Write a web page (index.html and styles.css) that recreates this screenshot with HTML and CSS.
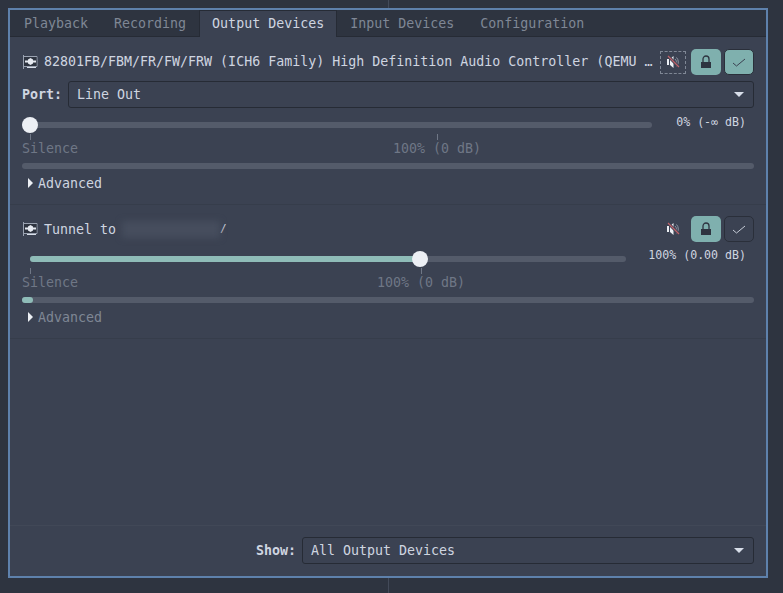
FILE: index.html
```html
<!DOCTYPE html>
<html lang="en">
<head>
  <meta charset="UTF-8">
  <title>Volume Control</title>
  <link rel="stylesheet" href="styles.css">
</head>
<body>
  <div class="backline"></div>
  <div class="window">
    <div class="tabs">
      <div class="tab">Playback</div>
      <div class="tab">Recording</div>
      <div class="tab active">Output Devices</div>
      <div class="tab">Input Devices</div>
      <div class="tab">Configuration</div>
    </div>

    <div class="device">
      <div class="header">
        <svg class="card" width="16" height="16" viewBox="0 0 16 16"><path d="M1.500 1v14M1.500 2.500h13.500v10H1.500" fill="none" stroke="#9aa2b1"/><rect x="2" y="3" width="12.500" height="9" fill="#2e3440"/><path d="M3 6.500h3v-1l2.500-1.500 2.500 1.500v1h3v2h-3v1L8.500 11 6 9.500v-1H3z" fill="#e5e9f0"/><rect x="5" y="13" width="9" height="1" fill="#d8dee9"/></svg>
        <div class="title">82801FB/FBM/FR/FW/FRW (ICH6 Family) High Definition Audio Controller (QEMU …</div>
        <div class="btn mute focus">
          <svg width="16" height="16" viewBox="0 0 16 16"><path d="M2 5h2v6H2zM5 5l3.500-3v12L5 11z" fill="#eceff4"/><path d="M10 5a4 4 0 0 1 0 6M11.500 3.500a6.500 6.500 0 0 1 0 9" fill="none" stroke="#8f96a5"/><path d="M3 2l11 11" stroke="#3b4252" stroke-width="3"/><path d="M3 2l11 11" stroke="#bf616a" stroke-width="1.200"/></svg>
        </div>
        <div class="btn lock on">
          <svg width="16" height="16" viewBox="0 0 16 16"><path d="M5 8.500V5a3 3 0 0 1 6 0v3.500" fill="none" stroke="#2e3440" stroke-width="1.300"/><rect x="3" y="8" width="10" height="6" fill="#2e3440"/></svg>
        </div>
        <div class="btn check on outlined">
          <svg width="16" height="16" viewBox="0 0 16 16"><path d="M2 9l3.500 3L14 5" fill="none" stroke="#3b4252" stroke-width="1"/></svg>
        </div>
      </div>

      <div class="port">
        <span class="field-label">Port:</span>
        <div class="select"><span>Line Out</span><span class="caret"></span></div>
      </div>

      <div class="slider-row">
        <div class="track">
          <div class="thumb" style="left: 0"></div>
        </div>
        <div class="value first">0% (-∞ dB)</div>
      </div>
      <div class="marks">
        <div class="mark start"><i></i>Silence</div>
        <div class="mark" style="margin-left: 315px"><i></i>100% (0 dB)</div>
      </div>
      <div class="level"></div>
      <div class="advanced"><span class="arrow"></span>Advanced</div>
    </div>

    <div class="device tunnel">
      <div class="header">
        <svg class="card" width="16" height="16" viewBox="0 0 16 16"><path d="M1.500 1v14M1.500 2.500h13.500v10H1.500" fill="none" stroke="#9aa2b1"/><rect x="2" y="3" width="12.500" height="9" fill="#2e3440"/><path d="M3 6.500h3v-1l2.500-1.500 2.500 1.500v1h3v2h-3v1L8.500 11 6 9.500v-1H3z" fill="#e5e9f0"/><rect x="5" y="13" width="9" height="1" fill="#d8dee9"/></svg>
        <div class="title">Tunnel to <span class="blurred"></span><span class="slash">/</span></div>
        <div class="btn mute">
          <svg width="16" height="16" viewBox="0 0 16 16"><path d="M2 5h2v6H2zM5 5l3.500-3v12L5 11z" fill="#eceff4"/><path d="M10 5a4 4 0 0 1 0 6M11.500 3.500a6.500 6.500 0 0 1 0 9" fill="none" stroke="#8f96a5"/><path d="M3 2l11 11" stroke="#3b4252" stroke-width="3"/><path d="M3 2l11 11" stroke="#bf616a" stroke-width="1.200"/></svg>
        </div>
        <div class="btn lock on">
          <svg width="16" height="16" viewBox="0 0 16 16"><path d="M5 8.500V5a3 3 0 0 1 6 0v3.500" fill="none" stroke="#2e3440" stroke-width="1.300"/><rect x="3" y="8" width="10" height="6" fill="#2e3440"/></svg>
        </div>
        <div class="btn check outlined">
          <svg width="16" height="16" viewBox="0 0 16 16"><path d="M2 9l3.500 3L14 5" fill="none" stroke="#c5cbd6" stroke-width="1"/></svg>
        </div>
      </div>

      <div class="slider-row">
        <div class="track inset">
          <div class="fill" style="width: 390px"></div>
          <div class="thumb" style="left: 382px"></div>
        </div>
        <div class="value">100% (0.00 dB)</div>
      </div>
      <div class="marks">
        <div class="mark start"><i></i>Silence</div>
        <div class="mark" style="margin-left: 299px"><i></i>100% (0 dB)</div>
      </div>
      <div class="level"><div class="level-fill" style="width: 11px"></div></div>
      <div class="advanced dim"><span class="arrow"></span>Advanced</div>
    </div>

    <div class="footer">
      <span class="field-label">Show:</span>
      <div class="select show"><span>All Output Devices</span><span class="caret"></span></div>
    </div>
  </div>
</body>
</html>
```

FILE: styles.css
```css
body {
  margin: 0;
  height: 593px;
  overflow: hidden;
  position: relative;
  background-color: #2e3440;
  color: #cfd5e0;
  font-family: "DejaVu Sans Mono", monospace;
  font-size: 13.3px;
}

.backline {
  position: absolute;
  left: 388px;
  top: 0;
  width: 1px;
  height: 593px;
  background-color: #434a59;
}

.window {
  position: relative;
  box-sizing: border-box;
  width: 760px;
  height: 570px;
  margin: 8px 0 0 8px;
  border: 2px solid #5e81ac;
  background-color: #3b4252;
  display: flex;
  flex-direction: column;
}

.tabs {
  display: flex;
  height: 27px;
  padding-left: 1px;
  box-sizing: border-box;
  background-color: #2e3440;
  border-bottom: 1px solid #262b35;
}

.tab {
  padding: 0 13px;
  line-height: 28px;
  color: #7f8795;
}

.tab.active {
  height: 27px;
  box-sizing: border-box;
  padding: 0 12px;
  background-color: #3b4252;
  color: #cfd5e0;
  border: 1px solid #262b35;
  border-bottom: none;
  line-height: 25px;
}

.device {
  padding: 12px;
  border-bottom: 1px solid #363d4b;
}

.device.tunnel {
  padding-top: 11px;
}

.header {
  display: flex;
  align-items: center;
  height: 26px;
}

.card {
  margin-right: 6px;
  flex: none;
}

.title {
  flex: 1;
  white-space: nowrap;
  margin-top: -2px;
}

.tunnel .title {
  margin-top: 0;
}

.blurred {
  display: inline-block;
  width: 98px;
  height: 17px;
  margin-left: -2px;
  vertical-align: middle;
  background-color: #464d5d;
  filter: blur(3px);
}

.slash {
  font-size: 11px;
  vertical-align: 2px;
}

.btn {
  box-sizing: border-box;
  display: flex;
  align-items: center;
  justify-content: center;
  height: 26px;
  flex: none;
}

.mute {
  width: 26px;
  margin-right: 5px;
}

.mute.focus {
  height: 23px;
  border: 1px dashed #7f8795;
}

.lock {
  width: 30px;
  margin-right: 3px;
}

.check {
  width: 30px;
}

.on {
  background-color: #7fb0ae;
  border-radius: 5px;
}

.outlined {
  border: 1px solid #2a2f3a;
  border-radius: 5px;
}

.port {
  display: flex;
  align-items: center;
  margin-top: 6px;
}

.field-label {
  font-weight: bold;
  font-size: 13.3px;
  margin-right: 6px;
}

.select {
  box-sizing: border-box;
  flex: 1;
  height: 27px;
  display: flex;
  align-items: center;
  justify-content: space-between;
  padding: 0 9px 0 8px;
  border: 1px solid #262b35;
  border-radius: 3px;
}

.caret {
  width: 0;
  height: 0;
  border-left: 5px solid transparent;
  border-right: 5px solid transparent;
  border-top: 5px solid #d8dee9;
}

.slider-row {
  display: flex;
  align-items: center;
  height: 18px;
  margin-top: 8px;
}

.track {
  flex: 1;
  height: 6px;
  position: relative;
  border-radius: 3px;
  background-color: #545b6a;
}

.track.inset {
  margin-left: 8px;
}

.fill {
  height: 6px;
  border-radius: 3px;
  background-color: #8fbcb8;
}

.thumb {
  position: absolute;
  top: -5px;
  width: 16px;
  height: 16px;
  border-radius: 50%;
  background-color: #eceff4;
}

.value {
  font-size: 11.6px;
  width: 106px;
  padding: 0 8px 0 0;
  margin-left: 22px;
  margin-top: -8px;
  text-align: right;
  box-sizing: border-box;
}

.value.first {
  width: 78px;
  margin-left: 24px;
  margin-top: -6px;
}

.marks {
  display: flex;
  color: #6f7786;
  height: 24px;
}

.mark {
  display: flex;
  flex-direction: column;
  align-items: center;
  line-height: 18px;
}

.mark i {
  display: block;
  flex: none;
  width: 1px;
  height: 6px;
  background-color: #6f7786;
}

.mark.start {
  align-items: flex-start;
}

.mark.start i {
  margin-left: 8px;
}

.level {
  height: 6px;
  margin-top: 5px;
  border-radius: 3px;
  background-color: #545b6a;
}

.level-fill {
  height: 6px;
  border-radius: 3px;
  background-color: #8fbcb8;
}

.advanced {
  display: flex;
  align-items: center;
  height: 18px;
  margin-top: 5px;
  padding-left: 6px;
}

.advanced.dim {
  color: #7f8795;
}

.arrow {
  width: 0;
  height: 0;
  margin-right: 5px;
  border-top: 5px solid transparent;
  border-bottom: 5px solid transparent;
  border-left: 5px solid #eceff4;
}

.footer {
  margin-top: auto;
  display: flex;
  align-items: center;
  justify-content: flex-end;
  padding: 11px 12px 12px;
  border-top: 1px solid #414857;
}

.select.show {
  flex: none;
  width: 452px;
}
```
